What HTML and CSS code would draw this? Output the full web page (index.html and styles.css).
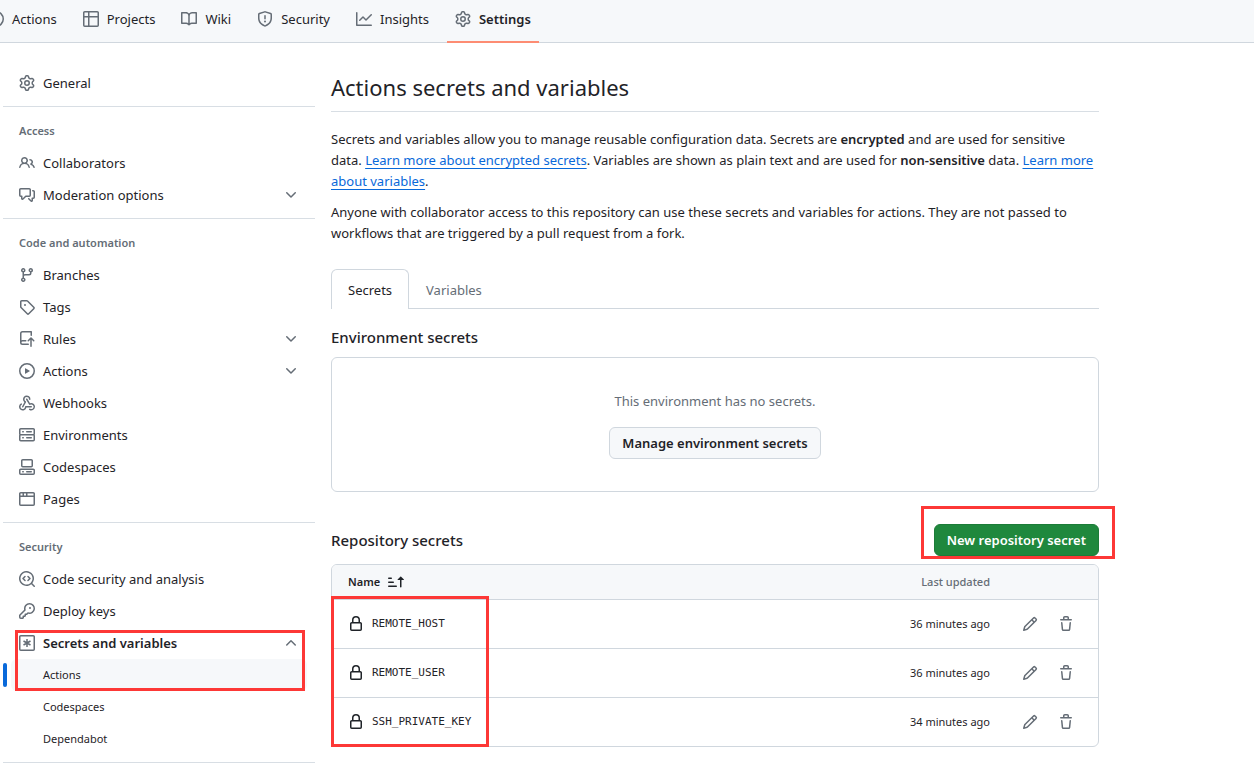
FILE: index.html
```html
<!DOCTYPE html>
<html lang="en">
<head>
<meta charset="utf-8">
<meta name="viewport" content="width=device-width, initial-scale=1">
<title>Actions secrets and variables</title>
<link rel="stylesheet" href="styles.css">
</head>
<body>
<svg class="sprite" aria-hidden="true">
  <symbol id="gear" viewBox="0 0 16 16"><path d="M8 0a8.2 8.2 0 0 1 .701.031C9.444.095 9.99.645 10.16 1.29l.288 1.107c.018.066.079.158.212.224.231.114.454.243.668.386.123.082.233.09.299.071l1.103-.303c.644-.176 1.392.021 1.82.63.27.385.506.792.704 1.218.315.675.111 1.422-.364 1.891l-.814.806c-.049.048-.098.147-.088.294.016.257.016.515 0 .772-.01.147.038.246.088.294l.814.806c.475.469.679 1.216.364 1.891a7.977 7.977 0 0 1-.704 1.217c-.428.61-1.176.807-1.82.63l-1.102-.302c-.067-.019-.177-.011-.3.071a5.909 5.909 0 0 1-.668.386c-.133.066-.194.158-.211.224l-.29 1.106c-.168.646-.715 1.196-1.458 1.26a8.006 8.006 0 0 1-1.402 0c-.743-.064-1.289-.614-1.458-1.26l-.289-1.106c-.018-.066-.079-.158-.212-.224a5.738 5.738 0 0 1-.668-.386c-.123-.082-.233-.09-.299-.071l-1.103.303c-.644.176-1.392-.021-1.82-.63a8.12 8.12 0 0 1-.704-1.218c-.315-.675-.111-1.422.363-1.891l.815-.806c.05-.048.098-.147.088-.294a6.214 6.214 0 0 1 0-.772c.01-.147-.038-.246-.088-.294l-.815-.806C.635 6.045.431 5.298.746 4.623a7.92 7.92 0 0 1 .704-1.217c.428-.61 1.176-.807 1.82-.63l1.102.302c.067.019.177.011.3-.071.214-.143.437-.272.668-.386.133-.066.194-.158.211-.224l.29-1.106C6.009.645 6.556.095 7.299.03 7.53.01 7.764 0 8 0Zm-.571 1.525c-.036.003-.108.036-.137.146l-.289 1.105c-.147.561-.549.967-.998 1.189-.173.086-.34.183-.5.29-.417.278-.97.423-1.529.27l-1.103-.303c-.109-.03-.175.016-.195.045-.22.312-.412.644-.573.99-.014.031-.021.11.059.19l.815.806c.411.406.562.957.53 1.456a4.709 4.709 0 0 0 0 .582c.032.499-.119 1.05-.53 1.456l-.815.806c-.081.08-.073.159-.059.19.162.346.353.677.573.989.02.03.085.076.195.046l1.102-.303c.56-.153 1.113-.008 1.53.27.161.107.328.204.501.29.447.222.85.629.997 1.189l.289 1.105c.029.109.101.143.137.146a6.6 6.6 0 0 0 1.142 0c.036-.003.108-.036.137-.146l.289-1.105c.147-.561.549-.967.998-1.189.173-.086.34-.183.5-.29.417-.278.97-.423 1.529-.27l1.103.303c.109.029.175-.016.195-.045.22-.313.411-.644.573-.99.014-.031.021-.11-.059-.19l-.815-.806c-.411-.406-.562-.957-.53-1.456a4.709 4.709 0 0 0 0-.582c-.032-.499.119-1.05.53-1.456l.815-.806c.081-.08.073-.159.059-.19a6.464 6.464 0 0 0-.573-.989c-.02-.03-.085-.076-.195-.046l-1.102.303c-.56.153-1.113.008-1.53-.27a4.44 4.44 0 0 0-.501-.29c-.447-.222-.85-.629-.997-1.189l-.289-1.105c-.029-.11-.101-.143-.137-.146a6.6 6.6 0 0 0-1.142 0ZM11 8a3 3 0 1 1-6 0 3 3 0 0 1 6 0ZM9.5 8a1.5 1.5 0 1 0-3.001.001A1.5 1.5 0 0 0 9.5 8Z"/></symbol>
  <symbol id="play" viewBox="0 0 16 16"><path d="M8 0a8 8 0 1 1 0 16A8 8 0 0 1 8 0ZM1.5 8a6.5 6.5 0 1 0 13 0 6.5 6.5 0 0 0-13 0Zm4.879-2.773 4.264 2.559a.25.25 0 0 1 0 .428l-4.264 2.559A.25.25 0 0 1 6 10.559V5.442a.25.25 0 0 1 .379-.215Z"/></symbol>
  <symbol id="table" viewBox="0 0 16 16"><path d="M0 1.75C0 .784.784 0 1.75 0h12.5C15.216 0 16 .784 16 1.75v12.5A1.75 1.75 0 0 1 14.25 16H1.75A1.75 1.75 0 0 1 0 14.25ZM6.5 6.5v8h7.75a.25.25 0 0 0 .25-.25V6.5Zm8-1.5V1.75a.25.25 0 0 0-.25-.25H6.5V5Zm-13 1.5v7.75c0 .138.112.25.25.25H5v-8ZM5 5V1.5H1.75a.25.25 0 0 0-.25.25V5Z"/></symbol>
  <symbol id="book" viewBox="0 0 16 16"><path d="M0 1.75A.75.75 0 0 1 .75 1h4.253c1.227 0 2.317.59 3 1.501A3.743 3.743 0 0 1 11.006 1h4.245a.75.75 0 0 1 .75.75v10.5a.75.75 0 0 1-.75.75h-4.507a2.25 2.25 0 0 0-1.591.659l-.622.621a.75.75 0 0 1-1.06 0l-.622-.621A2.25 2.25 0 0 0 5.258 13H.75a.75.75 0 0 1-.75-.75Zm7.251 10.324.004-5.073-.002-2.253A2.25 2.25 0 0 0 5.003 2.5H1.5v9h3.757a3.75 3.75 0 0 1 1.994.574ZM8.755 4.75l-.004 7.322a3.752 3.752 0 0 1 1.992-.572H14.5v-9h-3.495a2.25 2.25 0 0 0-2.25 2.25Z"/></symbol>
  <symbol id="shield" viewBox="0 0 16 16"><path d="M7.467.133a1.748 1.748 0 0 1 1.066 0l5.25 1.68A1.75 1.75 0 0 1 15 3.48V7c0 1.566-.32 3.182-1.303 4.682-.983 1.498-2.585 2.813-5.032 3.855a1.697 1.697 0 0 1-1.33 0c-2.447-1.042-4.049-2.357-5.032-3.855C1.32 10.182 1 8.566 1 7V3.48a1.75 1.75 0 0 1 1.217-1.667Zm.61 1.429a.25.25 0 0 0-.153 0l-5.25 1.68a.25.25 0 0 0-.174.238V7c0 1.358.275 2.666 1.057 3.86.784 1.194 2.121 2.34 4.366 3.297a.196.196 0 0 0 .154 0c2.245-.956 3.582-2.104 4.366-3.298C13.225 9.666 13.5 8.36 13.5 7V3.48a.251.251 0 0 0-.174-.237l-5.25-1.68ZM8.75 4.75v3a.75.75 0 0 1-1.5 0v-3a.75.75 0 0 1 1.5 0ZM9 10.5a1 1 0 1 1-2 0 1 1 0 0 1 2 0Z"/></symbol>
  <symbol id="graph" viewBox="0 0 16 16"><path d="M1.5 1.75V13.5h13.75a.75.75 0 0 1 0 1.5H.75a.75.75 0 0 1-.75-.75V1.75a.75.75 0 0 1 1.5 0Zm14.28 2.53-5.25 5.25a.75.75 0 0 1-1.06 0L7 7.06 4.28 9.78a.751.751 0 0 1-1.042-.018.751.751 0 0 1-.018-1.042l3.25-3.25a.75.75 0 0 1 1.06 0L10 7.94l4.72-4.72a.751.751 0 0 1 1.042.018.751.751 0 0 1 .018 1.042Z"/></symbol>
  <symbol id="people" viewBox="0 0 16 16"><path d="M2 5.5a3.5 3.5 0 1 1 5.898 2.549 5.508 5.508 0 0 1 3.034 4.084.75.75 0 1 1-1.482.235 4 4 0 0 0-7.9 0 .75.75 0 0 1-1.482-.236A5.507 5.507 0 0 1 3.102 8.05 3.493 3.493 0 0 1 2 5.5ZM11 4a3.001 3.001 0 0 1 2.22 5.018 5.01 5.01 0 0 1 2.56 3.012.749.749 0 0 1-.885.954.752.752 0 0 1-.549-.514 3.507 3.507 0 0 0-2.522-2.372.75.75 0 0 1-.574-.73v-.352a.75.75 0 0 1 .416-.672A1.5 1.5 0 0 0 11 5.5.75.75 0 0 1 11 4Zm-5.5-.5a2 2 0 1 0-.001 3.999A2 2 0 0 0 5.5 3.5Z"/></symbol>
  <symbol id="comments" viewBox="0 0 16 16"><path d="M1.75 1h8.5c.966 0 1.75.784 1.75 1.75v5.5A1.75 1.75 0 0 1 10.25 10H7.061l-2.574 2.573A1.458 1.458 0 0 1 2 11.543V10h-.25A1.75 1.75 0 0 1 0 8.25v-5.5C0 1.784.784 1 1.75 1ZM1.5 2.75v5.5c0 .138.112.25.25.25h1a.75.75 0 0 1 .75.75v2.19l2.72-2.72a.749.749 0 0 1 .53-.22h3.5a.25.25 0 0 0 .25-.25v-5.5a.25.25 0 0 0-.25-.25h-8.5a.25.25 0 0 0-.25.25Zm13 2a.25.25 0 0 0-.25-.25h-.5a.75.75 0 0 1 0-1.5h.5c.966 0 1.75.784 1.75 1.75v5.5A1.75 1.75 0 0 1 14.25 12H14v1.543a1.458 1.458 0 0 1-2.487 1.03L9.22 12.28a.749.749 0 0 1 .326-1.275.749.749 0 0 1 .734.215l2.22 2.22v-2.19a.75.75 0 0 1 .75-.75h1a.25.25 0 0 0 .25-.25Z"/></symbol>
  <symbol id="branch" viewBox="0 0 16 16"><path d="M9.5 3.25a2.25 2.25 0 1 1 3 2.122V6A2.5 2.5 0 0 1 10 8.5H6a1 1 0 0 0-1 1v1.128a2.251 2.251 0 1 1-1.5 0V5.372a2.25 2.25 0 1 1 1.5 0v1.836A2.493 2.493 0 0 1 6 7h4a1 1 0 0 0 1-1v-.628A2.25 2.25 0 0 1 9.5 3.25Zm-6 0a.75.75 0 1 0 1.5 0 .75.75 0 0 0-1.5 0Zm8.25-.75a.75.75 0 1 0 0 1.5.75.75 0 0 0 0-1.5ZM4.25 12a.75.75 0 1 0 0 1.5.75.75 0 0 0 0-1.5Z"/></symbol>
  <symbol id="tag" viewBox="0 0 16 16"><path d="M1 7.775V2.75C1 1.784 1.784 1 2.75 1h5.025c.464 0 .91.184 1.238.513l6.25 6.25a1.75 1.75 0 0 1 0 2.474l-5.026 5.026a1.75 1.75 0 0 1-2.474 0l-6.25-6.25A1.752 1.752 0 0 1 1 7.775Zm1.5 0c0 .066.026.13.073.177l6.25 6.25a.25.25 0 0 0 .354 0l5.025-5.025a.25.25 0 0 0 0-.354l-6.25-6.25a.25.25 0 0 0-.177-.073H2.75a.25.25 0 0 0-.25.25ZM6 5a1 1 0 1 1 0 2 1 1 0 0 1 0-2Z"/></symbol>
  <symbol id="rules" viewBox="0 0 16 16"><path d="M1 2.5A2.5 2.5 0 0 1 3.5 0h8.75a.75.75 0 0 1 .75.75v3.5a.75.75 0 0 1-1.5 0V1.5h-8a1 1 0 0 0-1 1v6.708A2.493 2.493 0 0 1 3.5 9h3.25a.75.75 0 0 1 0 1.5H3.5a1 1 0 0 0 0 2h5.75a.75.75 0 0 1 0 1.5H3.5A2.5 2.5 0 0 1 1 11.5Zm13.23 7.79-1.48-1.484v6.444a.75.75 0 0 1-1.5 0V8.806L9.77 10.29a.75.75 0 0 1-1.06-1.06l2.76-2.763a.75.75 0 0 1 1.06 0l2.76 2.763a.75.75 0 0 1-1.06 1.06Z"/></symbol>
  <symbol id="webhook" viewBox="0 0 16 16"><path d="M5.5 4.25a2.25 2.25 0 0 1 4.5 0 .75.75 0 0 0 1.5 0 3.75 3.75 0 1 0-6.14 2.889l-2.272 4.258a.75.75 0 0 0 1.324.706L7 7.25a.75.75 0 0 0-.309-1.015A2.25 2.25 0 0 1 5.5 4.25Z"/><path d="M7.364 3.607a.75.75 0 0 1 1.03.257l2.608 4.349a3.75 3.75 0 1 1-.628 6.785.75.75 0 0 1 .752-1.299 2.25 2.25 0 1 0-.033-3.88.75.75 0 0 1-1.03-.256L7.107 4.636a.75.75 0 0 1 .257-1.03Z"/><path d="M2.9 8.776A.75.75 0 0 1 2.625 9.8 2.25 2.25 0 1 0 6 11.75a.75.75 0 0 1 .75-.751h5.5a.75.75 0 0 1 0 1.5H7.425a3.751 3.751 0 1 1-5.55-3.998.75.75 0 0 1 1.024.274Z"/></symbol>
  <symbol id="server" viewBox="0 0 16 16"><path d="M1.75 1h12.5c.966 0 1.75.784 1.75 1.75v4c0 .372-.116.717-.314 1 .198.283.314.628.314 1v4a1.75 1.75 0 0 1-1.75 1.75H1.75A1.75 1.75 0 0 1 0 12.75v-4c0-.358.109-.707.314-1a1.739 1.739 0 0 1-.314-1v-4C0 1.784.784 1 1.75 1ZM1.5 2.75v4c0 .138.112.25.25.25h12.5a.25.25 0 0 0 .25-.25v-4a.25.25 0 0 0-.25-.25H1.75a.25.25 0 0 0-.25.25Zm.25 5.75a.25.25 0 0 0-.25.25v4c0 .138.112.25.25.25h12.5a.25.25 0 0 0 .25-.25v-4a.25.25 0 0 0-.25-.25ZM7 4.75A.75.75 0 0 1 7.75 4h4.5a.75.75 0 0 1 0 1.5h-4.5A.75.75 0 0 1 7 4.75ZM7.75 10h4.5a.75.75 0 0 1 0 1.5h-4.5a.75.75 0 0 1 0-1.5ZM3 4.75A.75.75 0 0 1 3.75 4h.5a.75.75 0 0 1 0 1.5h-.5A.75.75 0 0 1 3 4.75ZM3.75 10h.5a.75.75 0 0 1 0 1.5h-.5a.75.75 0 0 1 0-1.5Z"/></symbol>
  <symbol id="codespaces" viewBox="0 0 16 16"><path d="M0 11.25c0-.966.784-1.75 1.75-1.75h12.5c.966 0 1.75.784 1.75 1.75v3A1.75 1.75 0 0 1 14.25 16H1.75A1.75 1.75 0 0 1 0 14.25Zm2-9.5C2 .784 2.784 0 3.75 0h8.5C13.216 0 14 .784 14 1.75v5a1.75 1.75 0 0 1-1.75 1.75h-8.5A1.75 1.75 0 0 1 2 6.75Zm1.75-.25a.25.25 0 0 0-.25.25v5c0 .138.112.25.25.25h8.5a.25.25 0 0 0 .25-.25v-5a.25.25 0 0 0-.25-.25Zm-2 9.5a.25.25 0 0 0-.25.25v3c0 .138.112.25.25.25h12.5a.25.25 0 0 0 .25-.25v-3a.25.25 0 0 0-.25-.25ZM7 12.75a.75.75 0 0 1 .75-.75h4.5a.75.75 0 0 1 0 1.5h-4.5a.75.75 0 0 1-.75-.75Zm-4 0a.75.75 0 0 1 .75-.75h.5a.75.75 0 0 1 0 1.5h-.5a.75.75 0 0 1-.75-.75Z"/></symbol>
  <symbol id="browser" viewBox="0 0 16 16"><path d="M0 2.75C0 1.784.784 1 1.75 1h12.5c.966 0 1.75.784 1.75 1.75v10.5A1.75 1.75 0 0 1 14.25 15H1.75A1.75 1.75 0 0 1 0 13.25ZM14.5 6h-13v7.25c0 .138.112.25.25.25h12.5a.25.25 0 0 0 .25-.25Zm-6-3.5v2h6V2.75a.25.25 0 0 0-.25-.25ZM5 2.5v2h2v-2Zm-3.25 0a.25.25 0 0 0-.25.25V4.5h2v-2Z"/></symbol>
  <symbol id="codescan" viewBox="0 0 16 16"><path d="M8.47 4.97a.75.75 0 0 0 0 1.06L9.94 7.5 8.47 8.97a.75.75 0 1 0 1.06 1.06l2-2a.75.75 0 0 0 0-1.06l-2-2a.75.75 0 0 0-1.06 0ZM6.53 6.03a.75.75 0 0 0-1.06-1.06l-2 2a.75.75 0 0 0 0 1.06l2 2a.75.75 0 1 0 1.06-1.06L5.06 7.5l1.47-1.47Z"/><path d="M12.246 13.307a7.501 7.501 0 1 1 1.06-1.06l2.474 2.473a.749.749 0 0 1-.326 1.275.749.749 0 0 1-.734-.215ZM1.5 7.5a6.002 6.002 0 0 0 3.608 5.504 6.002 6.002 0 0 0 6.486-1.117.748.748 0 0 1 .292-.293A6 6 0 1 0 1.5 7.5Z"/></symbol>
  <symbol id="key" viewBox="0 0 16 16"><path d="M10.5 0a5.499 5.499 0 1 1-1.288 10.848l-.932.932a.749.749 0 0 1-.53.22H7v.75a.749.749 0 0 1-.22.53l-.5.5a.749.749 0 0 1-.53.22H5v.75a.749.749 0 0 1-.22.53l-.5.5a.749.749 0 0 1-.53.22h-2A1.75 1.75 0 0 1 0 14.25v-2c0-.199.079-.389.22-.53l4.932-4.932A5.5 5.5 0 0 1 10.5 0Zm-4 5.5c-.001.431.069.86.205 1.269a.75.75 0 0 1-.181.768L1.5 12.56v1.69c0 .138.112.25.25.25h1.69l.06-.06v-1.19a.75.75 0 0 1 .75-.75h1.19l.06-.06v-1.19a.75.75 0 0 1 .75-.75h1.19l1.023-1.025a.75.75 0 0 1 .768-.18A4 4 0 1 0 6.5 5.5ZM11 6a1 1 0 1 1 0-2 1 1 0 0 1 0 2Z"/></symbol>
  <symbol id="asterisk" viewBox="0 0 16 16"><path d="M1.75 0h12.5C15.216 0 16 .784 16 1.75v12.5A1.75 1.75 0 0 1 14.25 16H1.75A1.75 1.75 0 0 1 0 14.25V1.75C0 .784.784 0 1.75 0ZM1.5 1.75v12.5c0 .138.112.25.25.25h12.5a.25.25 0 0 0 .25-.25V1.75a.25.25 0 0 0-.25-.25H1.75a.25.25 0 0 0-.25.25Z"/><path d="M8 4v8M4.5 6l7 4M11.5 6l-7 4" fill="none" stroke="currentColor" stroke-width="1.5"/></symbol>
  <symbol id="down" viewBox="0 0 16 16"><path d="M12.78 5.22a.749.749 0 0 1 0 1.06l-4.25 4.25a.749.749 0 0 1-1.06 0L3.22 6.28a.749.749 0 1 1 1.06-1.06L8 8.939l3.72-3.719a.749.749 0 0 1 1.06 0Z"/></symbol>
  <symbol id="up" viewBox="0 0 16 16"><path d="M3.22 10.53a.749.749 0 0 1 0-1.06l4.25-4.25a.749.749 0 0 1 1.06 0l4.25 4.25a.749.749 0 1 1-1.06 1.06L8 6.811 4.28 10.53a.749.749 0 0 1-1.06 0Z"/></symbol>
  <symbol id="sort" viewBox="0 0 16 16"><path d="m12.927 2.573 3 3A.25.25 0 0 1 15.75 6H13.5v6.75a.75.75 0 0 1-1.5 0V6H9.75a.25.25 0 0 1-.177-.427l3-3a.25.25 0 0 1 .354 0ZM0 12.25a.75.75 0 0 1 .75-.75h7.5a.75.75 0 0 1 0 1.5H.75a.75.75 0 0 1-.75-.75Zm0-4a.75.75 0 0 1 .75-.75h4.5a.75.75 0 0 1 0 1.5H.75A.75.75 0 0 1 0 8.25Zm0-4a.75.75 0 0 1 .75-.75h2.5a.75.75 0 0 1 0 1.5H.75A.75.75 0 0 1 0 4.25Z"/></symbol>
  <symbol id="lock" viewBox="0 0 16 16"><path d="M4 4a4 4 0 0 1 8 0v2h.25c.966 0 1.75.784 1.75 1.75v5.5A1.75 1.75 0 0 1 12.25 15h-8.5A1.75 1.75 0 0 1 2 13.25v-5.5C2 6.784 2.784 6 3.75 6H4Zm8.25 3.5h-8.5a.25.25 0 0 0-.25.25v5.5c0 .138.112.25.25.25h8.5a.25.25 0 0 0 .25-.25v-5.5a.25.25 0 0 0-.25-.25ZM10.5 6V4a2.5 2.5 0 1 0-5 0v2Z"/></symbol>
  <symbol id="pencil" viewBox="0 0 16 16"><path d="M11.013 1.427a1.75 1.75 0 0 1 2.474 0l1.086 1.086a1.75 1.75 0 0 1 0 2.474l-8.61 8.61c-.21.21-.47.364-.756.445l-3.251.93a.75.75 0 0 1-.927-.928l.929-3.25c.081-.286.235-.547.445-.758l8.61-8.61Zm.176 4.823L9.75 4.81l-6.286 6.287a.253.253 0 0 0-.064.108l-.558 1.953 1.953-.558a.253.253 0 0 0 .108-.064Zm1.238-3.763a.25.25 0 0 0-.354 0L10.811 3.75l1.439 1.44 1.263-1.263a.25.25 0 0 0 0-.354Z"/></symbol>
  <symbol id="trash" viewBox="0 0 16 16"><path d="M11 1.75V3h2.25a.75.75 0 0 1 0 1.5H2.75a.75.75 0 0 1 0-1.5H5V1.75C5 .784 5.784 0 6.75 0h2.5C10.216 0 11 .784 11 1.75ZM4.496 6.675l.66 6.6a.25.25 0 0 0 .249.225h5.19a.25.25 0 0 0 .249-.225l.66-6.6a.75.75 0 0 1 1.492.149l-.66 6.6A1.748 1.748 0 0 1 10.595 15h-5.19a1.75 1.75 0 0 1-1.741-1.575l-.66-6.6a.75.75 0 1 1 1.492-.15ZM6.5 1.75V3h3V1.75a.25.25 0 0 0-.25-.25h-2.5a.25.25 0 0 0-.25.25Z"/></symbol>
</svg>

<nav class="topnav" aria-label="Repository">
  <a class="tab" href="#"><svg class="icon"><use href="#play"/></svg>Actions</a>
  <a class="tab" href="#"><svg class="icon"><use href="#table"/></svg>Projects</a>
  <a class="tab" href="#"><svg class="icon"><use href="#book"/></svg>Wiki</a>
  <a class="tab" href="#"><svg class="icon"><use href="#shield"/></svg>Security</a>
  <a class="tab" href="#"><svg class="icon"><use href="#graph"/></svg>Insights</a>
  <a class="tab tab-current" href="#" aria-current="page"><svg class="icon"><use href="#gear"/></svg>Settings</a>
</nav>

<div class="layout">
  <aside class="sidebar">
    <ul class="group">
      <li><a class="item" href="#"><svg class="icon"><use href="#gear"/></svg>General</a></li>
    </ul>
    <section class="group">
      <h2 class="group-title">Access</h2>
      <ul>
        <li><a class="item" href="#"><svg class="icon"><use href="#people"/></svg>Collaborators</a></li>
        <li><button class="item" type="button"><svg class="icon"><use href="#comments"/></svg>Moderation options<svg class="icon chevron"><use href="#down"/></svg></button></li>
      </ul>
    </section>
    <section class="group">
      <h2 class="group-title">Code and automation</h2>
      <ul>
        <li><a class="item" href="#"><svg class="icon"><use href="#branch"/></svg>Branches</a></li>
        <li><a class="item" href="#"><svg class="icon"><use href="#tag"/></svg>Tags</a></li>
        <li><button class="item" type="button"><svg class="icon"><use href="#rules"/></svg>Rules<svg class="icon chevron"><use href="#down"/></svg></button></li>
        <li><button class="item" type="button"><svg class="icon"><use href="#play"/></svg>Actions<svg class="icon chevron"><use href="#down"/></svg></button></li>
        <li><a class="item" href="#"><svg class="icon"><use href="#webhook"/></svg>Webhooks</a></li>
        <li><a class="item" href="#"><svg class="icon"><use href="#server"/></svg>Environments</a></li>
        <li><a class="item" href="#"><svg class="icon"><use href="#codespaces"/></svg>Codespaces</a></li>
        <li><a class="item" href="#"><svg class="icon"><use href="#browser"/></svg>Pages</a></li>
      </ul>
    </section>
    <section class="group">
      <h2 class="group-title">Security</h2>
      <ul>
        <li><a class="item" href="#"><svg class="icon"><use href="#codescan"/></svg>Code security and analysis</a></li>
        <li><a class="item" href="#"><svg class="icon"><use href="#key"/></svg>Deploy keys</a></li>
        <li class="expanded">
          <button class="item item-open" type="button" aria-expanded="true"><svg class="icon"><use href="#asterisk"/></svg>Secrets and variables<svg class="icon chevron"><use href="#up"/></svg></button>
          <ul>
            <li><a class="subitem subitem-current" href="#" aria-current="page">Actions</a></li>
            <li><a class="subitem" href="#">Codespaces</a></li>
            <li><a class="subitem" href="#">Dependabot</a></li>
          </ul>
          <span class="mark mark-menu"></span>
        </li>
      </ul>
    </section>
  </aside>

  <main class="content">
    <h1 class="title">Actions secrets and variables</h1>
    <p class="text">Secrets and variables allow you to manage reusable configuration data. Secrets are <strong>encrypted</strong> and are used for sensitive data. <a class="link" href="#">Learn more about encrypted secrets</a>. Variables are shown as plain text and are used for <strong>non-sensitive</strong> data. <a class="link" href="#">Learn more about variables</a>.</p>
    <p class="text">Anyone with collaborator access to this repository can use these secrets and variables for actions. They are not passed to workflows that are triggered by a pull request from a fork.</p>

    <nav class="subtabs" aria-label="Secrets and variables">
      <a class="subtab subtab-current" href="#" aria-current="page">Secrets</a>
      <a class="subtab" href="#">Variables</a>
    </nav>

    <h2 class="heading">Environment secrets</h2>
    <div class="blank">
      <p class="blank-text">This environment has no secrets.</p>
      <button class="btn" type="button">Manage environment secrets</button>
    </div>

    <div class="section-head">
      <h2 class="heading">Repository secrets</h2>
      <div class="marked">
        <button class="btn btn-primary" type="button">New repository secret</button>
        <span class="mark mark-button"></span>
      </div>
    </div>

    <div class="marked">
      <div class="card">
        <table class="secrets">
          <thead>
            <tr>
              <th class="name" scope="col"><button class="sort" type="button">Name <svg class="sort-icon"><use href="#sort"/></svg></button></th>
              <th class="updated" scope="col">Last updated</th>
              <td class="actions"></td>
            </tr>
          </thead>
          <tbody>
            <tr>
              <td class="name"><span class="secret"><svg class="icon"><use href="#lock"/></svg><code>REMOTE_HOST</code></span></td>
              <td class="updated">36 minutes ago</td>
              <td class="actions"><div class="buttons"><button type="button" aria-label="Edit REMOTE_HOST"><svg class="icon"><use href="#pencil"/></svg></button><button type="button" aria-label="Delete REMOTE_HOST"><svg class="icon"><use href="#trash"/></svg></button></div></td>
            </tr>
            <tr>
              <td class="name"><span class="secret"><svg class="icon"><use href="#lock"/></svg><code>REMOTE_USER</code></span></td>
              <td class="updated">36 minutes ago</td>
              <td class="actions"><div class="buttons"><button type="button" aria-label="Edit REMOTE_USER"><svg class="icon"><use href="#pencil"/></svg></button><button type="button" aria-label="Delete REMOTE_USER"><svg class="icon"><use href="#trash"/></svg></button></div></td>
            </tr>
            <tr>
              <td class="name"><span class="secret"><svg class="icon"><use href="#lock"/></svg><code>SSH_PRIVATE_KEY</code></span></td>
              <td class="updated">34 minutes ago</td>
              <td class="actions"><div class="buttons"><button type="button" aria-label="Edit SSH_PRIVATE_KEY"><svg class="icon"><use href="#pencil"/></svg></button><button type="button" aria-label="Delete SSH_PRIVATE_KEY"><svg class="icon"><use href="#trash"/></svg></button></div></td>
            </tr>
          </tbody>
        </table>
      </div>
      <span class="mark mark-names"></span>
    </div>
  </main>
</div>
</body>
</html>
```
FILE: styles.css
```css
:root {
  --fg: #1f2328;
  --muted: #656d76;
  --border: #d0d7de;
  --subtle: #f6f8fa;
  --accent: #0969da;
  --mark: #fd3836;
}

* { box-sizing: border-box; }

body {
  margin: 0;
  background: #fff;
  color: var(--fg);
  font-family: "Noto Sans", "Open Sans", sans-serif;
  font-size: 13px;
  line-height: 21px;
  overflow-x: hidden;
}

ul { margin: 0; padding: 0; list-style: none; }
h1, h2, p { margin: 0; }
a { color: inherit; text-decoration: none; }
button { font: inherit; color: inherit; background: none; border: 0; padding: 0; cursor: pointer; }
strong { font-weight: 600; }

.sprite { position: absolute; width: 0; height: 0; }
.icon { width: 16px; height: 16px; flex: none; fill: currentColor; color: var(--muted); }

.topnav {
  display: flex;
  gap: 10px;
  height: 43px;
  margin-left: -20px;
  background: var(--subtle);
  border-bottom: 1px solid var(--border);
}
.tab {
  display: flex;
  align-items: center;
  gap: 8px;
  height: 43px;
  padding: 0 8px 3px;
  border-bottom: 2px solid transparent;
}
.tab-current { font-weight: 600; border-bottom-color: #fd8c73; }

.layout {
  display: flex;
  gap: 16px;
  max-width: 1099px;
  padding: 0 0 8px 3px;
}

.sidebar { width: 312px; flex: none; padding-top: 16px; }
.group { padding: 8px 8px 7px; border-bottom: 1px solid #d8dee4; }
.group-title {
  padding: 0 8px;
  font-size: 11px;
  font-weight: 600;
  line-height: 32px;
  color: var(--muted);
}
.item {
  display: flex;
  align-items: center;
  gap: 8px;
  width: 100%;
  height: 32px;
  padding: 0 8px;
}
.item-open { font-weight: 600; }
.chevron { margin-left: auto; }
.expanded, .marked { position: relative; }
.subitem {
  display: block;
  position: relative;
  padding: 0 8px 0 32px;
  border-radius: 6px;
  font-size: 11px;
  line-height: 32px;
}
.subitem-current { background: var(--subtle); }
.subitem-current::before {
  content: "";
  position: absolute;
  top: 4px;
  left: -8px;
  width: 4px;
  height: 24px;
  border-radius: 6px;
  background: var(--accent);
}

.content { flex: 1; min-width: 0; padding-top: 26px; }
.title {
  padding-bottom: 6px;
  margin-bottom: 17px;
  border-bottom: 1px solid #d8dee4;
  font-size: 22px;
  font-weight: 400;
  line-height: 36px;
}
.text { margin-bottom: 10px; }
.link { color: var(--accent); text-decoration: underline; text-underline-offset: 3px; }

.subtabs {
  display: flex;
  height: 40px;
  margin-top: 25px;
  border-bottom: 1px solid var(--border);
}
.subtab {
  height: 40px;
  padding: 0 16px;
  border: 1px solid transparent;
  border-bottom: 0;
  line-height: 40px;
  color: var(--muted);
}
.subtab-current {
  background: #fff;
  border-color: var(--border);
  border-radius: 6px 6px 0 0;
  color: var(--fg);
}

.heading { font-size: 15px; font-weight: 500; line-height: 24px; }
.subtabs + .heading { margin: 16px 0 8px; }
.blank {
  padding: 33px 32px 32px;
  border: 1px solid var(--border);
  border-radius: 6px;
  text-align: center;
}
.blank-text { margin-bottom: 15px; color: var(--muted); }
.btn {
  height: 32px;
  padding: 0 12px;
  border: 1px solid var(--border);
  border-radius: 6px;
  background: var(--subtle);
  font-weight: 600;
}
.btn-primary { display: block; background: #1f883d; border-color: #1c7c38; color: #fff; }
.section-head {
  display: flex;
  align-items: center;
  justify-content: space-between;
  margin: 32px 0 8px;
}

.card { border: 1px solid var(--border); border-radius: 6px; overflow: hidden; }
.secrets { width: 100%; border-collapse: collapse; font-size: 11px; }
.secrets th { font-weight: 500; text-align: left; }
.secrets thead { background: var(--subtle); }
.secrets thead tr { height: 34px; }
.secrets tbody tr { height: 49px; border-top: 1px solid var(--border); }
.secrets th, .secrets td { padding: 0; }
.secrets .name { padding-left: 16px; }
.secrets .updated { width: 160px; text-align: right; }
.secrets .actions { width: 108px; }
.secrets th.updated { color: var(--muted); }
.sort { display: flex; align-items: center; gap: 8px; font-weight: 600; }
.sort-icon { width: 16px; height: 16px; fill: currentColor; }
.secret { display: flex; align-items: center; gap: 8px; }
.secret .icon { color: var(--fg); }
.secret code { font-family: "DejaVu Sans Mono", monospace; font-size: 11px; }
.buttons { display: flex; gap: 8px; justify-content: flex-end; padding-right: 18px; }
.buttons button { display: grid; place-items: center; width: 28px; height: 28px; }

/* Highlight frames drawn over the page */
.mark { position: absolute; border: 3px solid var(--mark); pointer-events: none; }
.mark-menu { top: 3px; left: 4px; right: 2px; height: 61px; }
.mark-button { top: -18px; left: -13px; right: -16px; bottom: -3px; }
.mark-names { top: 32px; left: 0; width: 158px; bottom: 0; }
```
